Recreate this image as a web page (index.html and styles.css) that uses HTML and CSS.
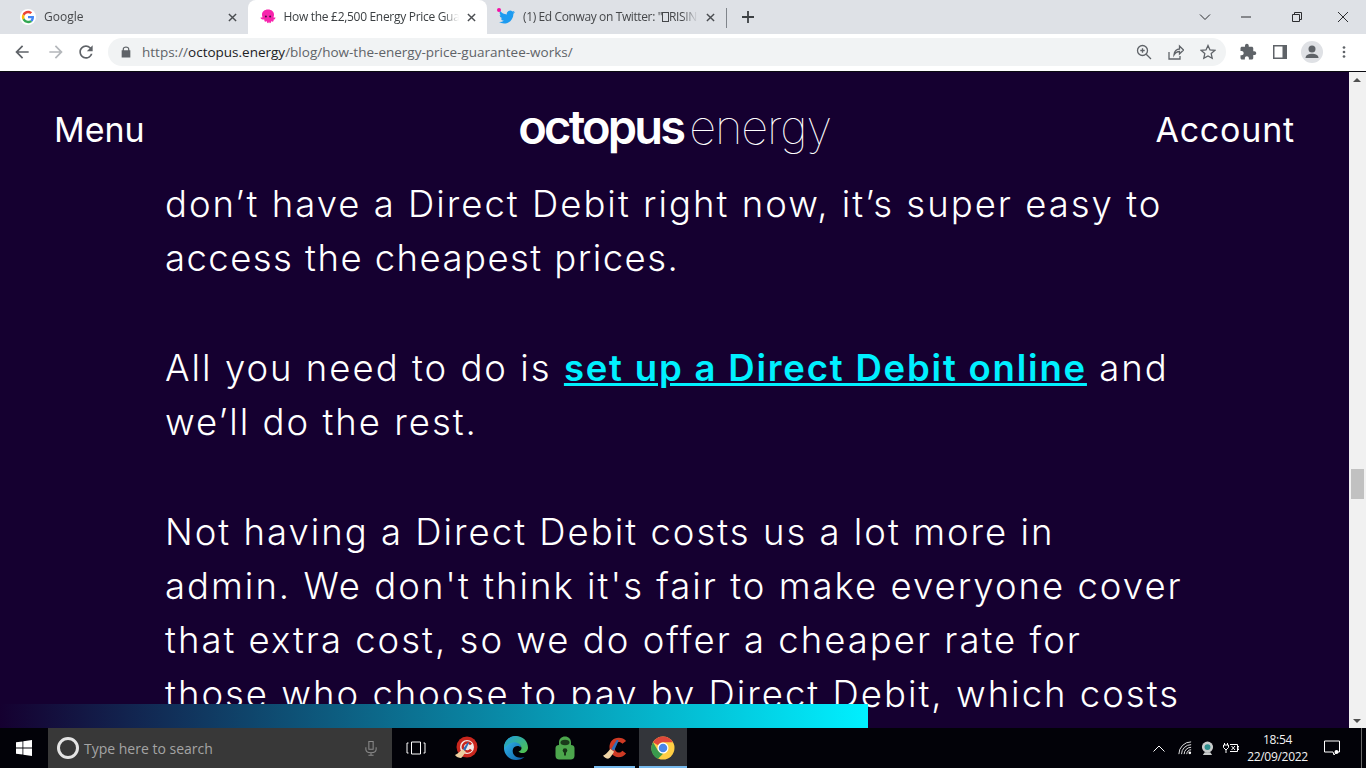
FILE: index.html
```html
<!DOCTYPE html>
<html lang="en">
<head>
  <meta charset="UTF-8">
  <meta name="viewport" content="width=device-width, initial-scale=1.0">
  <title>How the £2,500 Energy Price Guarantee works</title>
  <link rel="stylesheet" href="styles.css">
</head>
<body>
  <!-- Tabs -->
  <div class="tabstrip">
    <div class="tab">
      <svg class="favicon" viewBox="0 0 48 48"><circle cx="24" cy="24" r="24" fill="#fff"/><path fill="#EA4335" d="M24 12.5c3.2 0 5.6 1.3 7.2 2.8l5.3-5.2C33.300 7.200 29.100 5.500 24 5.500 16.800 5.500 10.600 9.600 7.600 15.600l6.100 4.800C15.100 15.800 19.200 12.500 24 12.500z"/><path fill="#4285F4" d="M42 24.400c0-1.500-.1-2.600-.4-3.700H24v6.800h10.300c-.2 1.700-1.300 4.200-3.800 5.900l5.900 4.600C39.900 34.800 42 30 42 24.400z"/><path fill="#FBBC05" d="M13.700 27.600c-.4-1.100-.6-2.300-.6-3.600s.2-2.500.6-3.600l-6.100-4.800C6.300 18.100 5.500 21 5.500 24s.8 5.900 2.100 8.400l6.100-4.800z"/><path fill="#34A853" d="M24 42.500c5 0 9.200-1.600 12.300-4.500l-5.900-4.600c-1.600 1.100-3.700 1.900-6.400 1.900-4.800 0-8.900-3.300-10.300-7.700l-6.100 4.800C10.600 38.400 16.800 42.500 24 42.500z"/></svg>
      <span class="tab-title">Google</span>
      <svg class="tab-close" viewBox="0 0 10 10"><path d="M1 1l8 8M9 1l-8 8"/></svg>
    </div>
    <div class="tab tab-active">
      <svg class="favicon" viewBox="0 0 16 16"><path fill="#f724ad" d="M8 .5c3.600 0 6 2.200 6 5.200 0 1-.2 1.900-.6 2.600.5.300 1.200.4 2.100.2-.1 1.200-.8 2-1.900 2.100.2.800 0 1.700-.7 2.200-.6-.1-1.100-.4-1.500-.9-.2 1-.8 2-1.500 2.300-.5-.4-.8-1-.9-1.600-.1.600-.4 1.200-.9 1.600-.7-.3-1.300-1.300-1.500-2.300-.4.500-.9.800-1.500.9-.7-.5-.9-1.400-.7-2.200C1.300 10.500.6 9.700.5 8.500c.9.200 1.600.1 2.100-.2C2.200 7.600 2 6.700 2 5.700 2 2.700 4.400.5 8 .5z"/><circle cx="5.900" cy="7.400" r="1" fill="#4a1040"/><circle cx="10.100" cy="7.400" r="1" fill="#4a1040"/></svg>
      <span class="tab-title">How the £2,500 Energy Price Gua</span>
      <svg class="tab-close" viewBox="0 0 10 10"><path d="M1 1l8 8M9 1l-8 8"/></svg>
    </div>
    <div class="tab tab-last">
      <span class="favicon favicon-wrap">
        <svg viewBox="0 0 24 24"><path fill="#1d9bf0" d="M23.953 4.57a10 10 0 01-2.825.775 4.958 4.958 0 002.163-2.723c-.951.555-2.005.959-3.127 1.184a4.92 4.92 0 00-8.384 4.482C7.69 8.095 4.067 6.13 1.64 3.162a4.822 4.822 0 00-.666 2.475c0 1.71.87 3.213 2.188 4.096a4.904 4.904 0 01-2.228-.616v.06a4.923 4.923 0 003.946 4.827 4.996 4.996 0 01-2.212.085 4.936 4.936 0 004.604 3.417 9.867 9.867 0 01-6.102 2.105c-.39 0-.779-.023-1.17-.067a13.995 13.995 0 007.557 2.209c9.053 0 13.998-7.496 13.998-13.985 0-.21 0-.42-.015-.63A9.935 9.935 0 0024 4.59z"/></svg>
        <span class="tab-dot"></span>
      </span>
      <span class="tab-title">(1) Ed Conway on Twitter: "<span class="tofu"></span>RISIN</span>
      <svg class="tab-close" viewBox="0 0 10 10"><path d="M1 1l8 8M9 1l-8 8"/></svg>
    </div>
    <div class="tab-sep"></div>
    <svg class="new-tab" viewBox="0 0 12 12"><path d="M6 0v12M0 6h12"/></svg>
    <div class="win-controls">
      <svg class="win-chevron" viewBox="0 0 12 12"><path d="M1 3.500l5 5 5-5"/></svg>
      <svg class="win-min" viewBox="0 0 12 12"><path d="M1 6h10"/></svg>
      <svg class="win-restore" viewBox="0 0 12 12"><path d="M1.500 3.500h7v7h-7zM3.500 3.500v-2h7v7h-2"/></svg>
      <svg class="win-close" viewBox="0 0 12 12"><path d="M1 1l10 10M11 1L1 11"/></svg>
    </div>
  </div>

  <!-- Address bar -->
  <div class="toolbar">
    <svg class="tool" viewBox="0 0 24 24"><path fill="#5f6368" d="M20 11H7.830l5.590-5.590L12 4l-8 8 8 8 1.410-1.410L7.830 13H20v-2z"/></svg>
    <svg class="tool" viewBox="0 0 24 24"><path fill="#b4b7bb" d="M4 11h12.170l-5.590-5.590L12 4l8 8-8 8-1.410-1.410L16.170 13H4v-2z"/></svg>
    <svg class="tool" viewBox="0 0 24 24"><path fill="#5f6368" d="M17.650 6.350A7.958 7.958 0 0012 4c-4.420 0-7.990 3.580-7.990 8s3.570 8 7.990 8c3.730 0 6.840-2.550 7.730-6h-2.080A5.990 5.990 0 0112 18c-3.310 0-6-2.690-6-6s2.690-6 6-6c1.660 0 3.140.69 4.220 1.780L13 11h7V4l-2.350 2.350z"/></svg>
    <div class="omnibox">
      <svg class="lock" viewBox="0 0 12 14"><path fill="#5f6368" d="M2 5V3.800C2 1.700 3.700.5 6 .5s4 1.200 4 3.300V5h1.200v8.500H.8V5H2zm1.500 0h5V3.800C8.500 2.500 7.400 2 6 2s-2.500.5-2.500 1.800V5z"/></svg>
      <span class="url"><span class="url-dim">https://</span>octopus.energy<span class="url-dim">/blog/how-the-energy-price-guarantee-works/</span></span>
      <svg class="omni-icon" viewBox="0 0 16 16"><circle cx="6.500" cy="6.500" r="5"/><path d="M10.200 10.200L15 15M4.300 6.500h4.400M6.500 4.300v4.400"/></svg>
      <svg class="omni-icon" viewBox="0 0 16 16"><path d="M1 8v7h11v-3M6 11c0-4 3-6 5.500-6V2L15.500 6l-4 4V7.500C9 7.500 7.300 8.800 6 11z"/></svg>
      <svg class="omni-icon" viewBox="0 0 16 16"><path d="M8 1.500l2 4.400 4.800.5-3.600 3.200 1 4.700L8 11.900l-4.200 2.400 1-4.700L1.200 6.400 6 5.900z"/></svg>
    </div>
    <svg class="tool-end" viewBox="0 0 24 24"><path fill="#5f6368" d="M20.500 11H19V7c0-1.100-.9-2-2-2h-4V3.500C13 2.120 11.880 1 10.500 1S8 2.120 8 3.500V5H4c-1.100 0-1.990.9-1.990 2v3.800H3.500c1.490 0 2.700 1.210 2.700 2.700s-1.210 2.700-2.700 2.700H2V20c0 1.100.9 2 2 2h3.800v-1.500c0-1.490 1.210-2.700 2.700-2.700 1.490 0 2.700 1.210 2.700 2.700V22H17c1.100 0 2-.9 2-2v-4h1.500c1.380 0 2.500-1.120 2.500-2.500S21.880 11 20.500 11z"/></svg>
    <svg class="tool-end tool-panel" viewBox="3 3 18 18"><path fill="#5f6368" fill-rule="evenodd" d="M5 5h14v14H5zM6.500 6.500v11H14.500v-11z"/></svg>
    <span class="avatar">
      <svg viewBox="0 0 22 22"><circle cx="11" cy="8" r="3.500" fill="#5f6368"/><path fill="#5f6368" d="M4.500 17c0-3 3.500-4.300 6.500-4.300s6.500 1.300 6.500 4.300z"/></svg>
    </span>
    <svg class="tool-end tool-menu" viewBox="0 0 24 24"><circle cx="12" cy="6" r="1.800" fill="#5f6368"/><circle cx="12" cy="12" r="1.800" fill="#5f6368"/><circle cx="12" cy="18" r="1.800" fill="#5f6368"/></svg>
  </div>

  <!-- Page -->
  <div class="viewport">
    <div class="page">
      <div class="nav">
        <span class="nav-link">Menu</span>
        <div class="logo"><span class="logo-bold">octopus</span><span class="logo-thin">energy</span></div>
        <span class="nav-link nav-right">Account</span>
      </div>
      <div class="article">
        <p>don’t have a Direct Debit right now, it’s super easy to<br><span class="tight">access the cheapest prices.</span></p>
        <p>All you need to do is <a href="#">set up a Direct Debit online</a> and<br>we’ll do the rest.</p>
        <p>Not having a Direct Debit costs us a lot more in<br>admin. We don't think it's fair to make everyone cover<br>that extra cost, so we do offer a cheaper rate for<br>those who choose to pay by Direct Debit, which costs</p>
      </div>
      <div class="progress"></div>
    </div>
    <div class="scrollbar">
      <span class="arrow-up"></span>
      <div class="thumb"></div>
      <span class="arrow-down"></span>
    </div>
  </div>

  <!-- Windows taskbar -->
  <div class="taskbar">
    <div class="start">
      <svg viewBox="0 0 16 16"><path fill="#fff" d="M0 2.300l6.500-.9v6.200H0zM7.300 1.300L16 0v7.600H7.300zM0 8.400h6.500v6.200L0 13.700zM7.300 8.400H16V16l-8.700-1.200z"/></svg>
    </div>
    <div class="search">
      <span class="cortana"></span>
      <span class="search-text">Type here to search</span>
      <svg class="mic" viewBox="0 0 14 18"><path d="M4.500 1.500h5v9h-5zM1 8v2.500C1 13 3.500 14.500 7 14.500s6-1.500 6-4V8M7 14.500v3M4 17.500h6"/></svg>
    </div>
    <div class="task">
      <svg viewBox="0 0 20 14" class="taskview"><path d="M5.500 1h9v12h-9zM2.500 2H1v10h1.500M17.500 2H19v10h-1.500"/></svg>
    </div>
    <div class="task">
      <svg viewBox="0 0 24 24" class="task-icon"><circle cx="13" cy="11" r="10.500" fill="#c8261d"/><circle cx="13" cy="11" r="7" fill="#f3e8e4"/><path d="M17 8.500a4.500 4.500 0 100 5" fill="none" stroke="#c8261d" stroke-width="2.500"/><path d="M1 19c3-1 6-5 8-6l3 3c-2 2-4 6-5 6-2 0-5-1-6-3z" fill="#edcf9f"/><path d="M9 13l5-7 1 1-4 8z" fill="#2c6fbb"/></svg>
    </div>
    <div class="task">
      <svg viewBox="0 0 24 24" class="task-icon task-edge"><defs><linearGradient id="edgeA" x1="0" y1="0" x2="1" y2="1"><stop offset="0" stop-color="#35c1f1"/><stop offset="1" stop-color="#0c59a4"/></linearGradient><linearGradient id="edgeB" x1="0" y1="0" x2="1" y2="1"><stop offset="0" stop-color="#1b9de2"/><stop offset="1" stop-color="#54c441"/></linearGradient></defs><path fill="url(#edgeA)" d="M12 0C5.400 0 0 5.400 0 12c0 6.600 5.400 12 12 12 3.600 0 6.400-1 8.500-3-3 1-7 1-9.500-1-3-2.500-3-7-.5-9 2-1.500 5-1.500 6 .5 1.500-5-2-11.500-4.500-11.500z"/><path fill="url(#edgeB)" d="M12 0c6.600 0 12 5 12 11.500 0 3.500-2.700 5.500-5.500 5.500-2 0-3.500-.6-4-1.500 2-.3 3.200-1.800 3-3.500C17 8 13 5.500 8.500 6.500 5 7.300 2 10 0 12 0 5.400 5.400 0 12 0z"/></svg>
    </div>
    <div class="task">
      <svg viewBox="0 0 20 24" class="task-icon"><path fill="#4ca64c" d="M4 9V6.500C4 3 6.500.5 10 .5s6 2.500 6 6V9c2 0 3.500 1 3.500 3v8c0 2.500-2 3.500-3.500 3.500H4C2.500 23.500.5 22.500.5 20v-8C.5 10 2 9 4 9z"/><ellipse cx="10" cy="6.500" rx="4.500" ry="2.800" fill="#1b3a1b"/><circle cx="10" cy="14.500" r="2.300" fill="#173317"/><path d="M9 15.500h2v4H9z" fill="#173317"/></svg>
    </div>
    <div class="task task-open">
      <svg viewBox="0 0 26 24" class="task-icon"><path fill="#cf3a24" d="M17 1C11 1 7 5.500 7 11s4 11 10 11c3.500 0 6-1.500 8-4l-4-3c-1 1.500-2.500 2-4 2-2.800 0-4.500-2.800-4.500-6s1.700-5.500 4.500-5.500c1.500 0 3 .7 4 2l4-3c-2-2.500-4.500-3.500-8-3.500z"/><path d="M0 20c3-.5 6-5 8-7l4 3c-2 3-4 7-6 7.500-2 .2-5-1.500-6-3.500z" fill="#efd3a5"/><path d="M9 13L15 3l2 1-5 11z" fill="#2c6fbb"/></svg>
    </div>
    <div class="task task-open task-active">
      <svg viewBox="0 0 48 48" class="task-icon task-chrome"><circle cx="24" cy="24" r="23" fill="#ffce44"/><path fill="#e0483a" d="M24 1a23 23 0 0119.900 11.500H24a11.500 11.500 0 00-10 5.800L4.100 12.500A23 23 0 0124 1z"/><path fill="#3a9a4d" d="M14 29.700l10 5.800L14.100 45.700A23 23 0 014.100 12.500z"/><circle cx="24" cy="24" r="11" fill="#fff"/><circle cx="24" cy="24" r="8.500" fill="#4a86e8"/></svg>
    </div>
    <div class="tray">
      <svg class="tray-chevron" viewBox="0 0 12 7"><path d="M.5 6.500L6 1l5.500 5.500"/></svg>
      <svg class="tray-wifi" viewBox="0 0 16 16"><path d="M1 15A14 14 0 0115 1M4 15A11 11 0 0115 4.200M7 15A8 8 0 0115 7.200M10 15a5 5 0 015-5"/><circle cx="13.500" cy="13.500" r="1.500" fill="#fff" stroke="none"/></svg>
      <svg class="tray-cam" viewBox="0 0 14 16"><circle cx="7" cy="6.500" r="6" fill="#c9cccc"/><circle cx="7" cy="6.500" r="3.200" fill="#2f8f8f"/><path d="M2 15h10l-2-3H4z" fill="#c9cccc"/></svg>
      <svg class="tray-power" viewBox="0 0 16 12"><path d="M1.500 1v2M4.500 1v2M.5 3h5v2.500L3 8 .5 5.500zM3 8v3M7 2.500h7.500v7H7M14.500 4.500H16v3h-1.500M8.500 4l3.500 4M12 4L8.500 8"/></svg>
      <div class="clock">18:54<br>22/09/2022</div>
      <svg class="tray-note" viewBox="0 0 16 16"><path d="M.5 1h15v11h-3l-2.500 3-1-3H.5z"/><circle cx="12.500" cy="12" r="2" fill="#fff" stroke="none"/></svg>
      <span class="show-desktop"></span>
    </div>
  </div>
</body>
</html>
```

FILE: styles.css
```css
* {
  box-sizing: border-box;
  margin: 0;
  padding: 0;
}

html, body {
  height: 100%;
  overflow: hidden;
}

body {
  width: 1366px;
  height: 768px;
  display: flex;
  flex-direction: column;
  font-family: "Open Sans", "Noto Sans", Arial, sans-serif;
  background: #150030;
}

svg {
  display: block;
  flex-shrink: 0;
}

/* Tabs */
.tabstrip {
  height: 34px;
  background: #dee1e6;
  display: flex;
  align-items: flex-end;
  padding-left: 8px;
}

.tab {
  width: 239.500px;
  height: 26px;
  padding: 0 8px 8px 12px;
  display: flex;
  align-items: center;
  gap: 8px;
  font-size: 12px;
  letter-spacing: -.3px;
  line-height: 16px;
  color: #45474a;
  border-radius: 8px 8px 0 0;
}

.tab-active {
  height: 34px;
  background: #fff;
  color: #3c4043;
  padding-bottom: 0;
}

.tab-last {
  width: 239px;
  letter-spacing: -.38px;
}

.favicon {
  width: 16px;
  height: 16px;
  flex-shrink: 0;
}

.favicon-wrap {
  position: relative;
  display: block;
}

.tab-dot {
  position: absolute;
  top: -1px;
  left: -2px;
  width: 4px;
  height: 4px;
  border-radius: 50%;
  background: #f50fa5;
}

.tab-title {
  flex: 1;
  min-width: 0;
  white-space: nowrap;
  overflow: hidden;
  -webkit-mask-image: linear-gradient(to right, #000 calc(100% - 16px), transparent 100%);
  mask-image: linear-gradient(to right, #000 calc(100% - 16px), transparent 100%);
}

.tab:first-child .tab-title {
  letter-spacing: 0;
}

.tofu {
  display: inline-block;
  width: 7px;
  height: 10px;
  border: 1px solid #45474a;
  vertical-align: -1px;
}

.tab-close {
  width: 9px;
  height: 9px;
  margin-right: 3px;
  fill: none;
  stroke: #4a4d51;
  stroke-width: 1.600;
}

.tab-sep {
  width: 1px;
  height: 20px;
  margin-bottom: 6px;
  background: #80858b;
}

.new-tab {
  width: 12px;
  height: 12px;
  margin: 0 0 11px 15px;
  fill: none;
  stroke: #3c4043;
  stroke-width: 1.800;
}

.win-controls {
  margin-left: auto;
  height: 34px;
  display: flex;
  align-items: center;
  padding-right: 17px;
}

.win-controls svg {
  fill: none;
  stroke: #2c2d30;
  stroke-width: 1;
  width: 12px;
  height: 12px;
}

.win-min {
  margin-left: 29px;
}

.win-restore {
  margin-left: 39px;
}

.win-close {
  margin-left: 34px;
}

/* Toolbar */
.toolbar {
  height: 37px;
  background: #fff;
  display: flex;
  align-items: center;
  padding: 0 12px 2px 12px;
  flex-shrink: 0;
}

.tool {
  width: 20px;
  height: 20px;
  margin-right: 14px;
}

.tool:nth-child(2) {
  margin-right: 10px;
}

.tool:nth-child(3) {
  margin-right: 12px;
}

.omnibox {
  width: 1118px;
  height: 28px;
  border-radius: 14px;
  background: #f1f3f4;
  display: flex;
  align-items: center;
  padding-left: 13px;
}

.lock {
  width: 10px;
  height: 12px;
  margin-right: 11px;
}

.url {
  flex: 1;
  font-size: 13.500px;
  color: #202124;
  white-space: nowrap;
}

.url-dim {
  color: #5f6368;
}

.omni-icon {
  width: 16px;
  height: 16px;
  margin-right: 16px;
  fill: none;
  stroke: #5f6368;
  stroke-width: 1.300;
}

.omni-icon:last-child {
  margin-right: 10px;
}

.tool-end {
  width: 18px;
  height: 18px;
  margin-left: 13px;
}

.tool-panel {
  margin-left: 14px;
}

.avatar {
  width: 22px;
  height: 22px;
  margin-left: 12px;
  border-radius: 50%;
  background: #dfe1e5;
  display: block;
}

.tool-menu {
  margin-left: 12px;
}

/* Page */
.viewport {
  height: 657px;
  display: flex;
  flex-shrink: 0;
  border-top: 1px solid #0a0a10;
}

.page {
  position: relative;
  width: 1349px;
  overflow: hidden;
  background: #150030;
  color: #fff;
  font-family: Inter, "Liberation Sans", sans-serif;
}

.nav {
  height: 105px;
  padding: 0 54px;
  display: grid;
  grid-template-columns: 1fr auto 1fr;
  align-items: start;
}

.nav-link {
  margin-top: 35px;
  font-size: 34px;
  font-weight: 400;
  line-height: 46px;
}

.nav-right {
  justify-self: end;
  letter-spacing: .8px;
}

.logo {
  margin-top: 25px;
  display: flex;
  align-items: baseline;
  line-height: 60px;
}

.logo-bold {
  font-size: 47px;
  font-weight: 600;
  letter-spacing: -2.800px;
}

.logo-thin {
  margin-left: 6px;
  font-size: 47px;
  font-weight: 100;
  letter-spacing: -1.200px;
}

.article {
  padding-left: 165px;
  font-size: 36.500px;
  font-weight: 300;
  letter-spacing: 2px;
  line-height: 54px;
  white-space: nowrap;
}

.article p {
  margin-bottom: 56px;
}

.article a {
  color: #00f0ff;
  font-weight: 600;
  letter-spacing: 1.800px;
}

.tight {
  letter-spacing: 1.450px;
}

.progress {
  position: absolute;
  left: 0;
  bottom: 0;
  width: 868px;
  height: 24px;
  background: linear-gradient(to right, #150030 0%, #00f0ff 100%);
}

.scrollbar {
  position: relative;
  width: 17px;
  background: #f1f1f1;
}

.thumb {
  position: absolute;
  top: 397px;
  left: 2px;
  width: 13px;
  height: 30px;
  background: #c1c1c1;
}

.arrow-up, .arrow-down {
  position: absolute;
  left: 4px;
  width: 0;
  height: 0;
  border-left: 4px solid transparent;
  border-right: 4px solid transparent;
}

.arrow-up {
  top: 6px;
  border-bottom: 4px solid #505050;
}

.arrow-down {
  bottom: 5px;
  border-top: 4px solid #505050;
}

/* Taskbar */
.taskbar {
  height: 40px;
  flex-shrink: 0;
  background: #020208;
  display: flex;
  align-items: stretch;
  color: #fff;
}

.start {
  width: 48px;
  display: flex;
  align-items: center;
  justify-content: center;
}

.start svg {
  width: 16px;
  height: 16px;
}

.search {
  width: 344px;
  background: #383838;
  display: flex;
  align-items: center;
  padding-left: 9px;
}

.cortana {
  width: 22px;
  height: 22px;
  border: 3px solid #e4e4e4;
  border-radius: 50%;
}

.search-text {
  flex: 1;
  margin-left: 5px;
  font-size: 14px;
  color: #a4a4a4;
}

.mic {
  width: 12px;
  height: 16px;
  margin-right: 15px;
  fill: none;
  stroke: #8a8a8a;
  stroke-width: 1.200;
}

.task {
  width: 49.500px;
  display: flex;
  align-items: center;
  justify-content: center;
  position: relative;
}

.taskview {
  width: 20px;
  height: 14px;
  margin-right: 2px;
  fill: none;
  stroke: #fff;
  stroke-width: 1;
}

.task-icon {
  width: 24px;
  height: 24px;
}

.task-open::after {
  content: "";
  position: absolute;
  left: 4px;
  right: 5px;
  bottom: 0;
  height: 2px;
  background: #76b9ed;
}

.task-active {
  background: #33353a;
  width: 48px;
  margin-left: -1px;
}

.task-active::after {
  left: 0;
  right: 0;
}

.tray {
  flex: 1;
  display: flex;
  align-items: center;
  padding-left: 466px;
  position: relative;
}

.tray svg {
  fill: none;
  stroke: #fff;
}

.tray-chevron {
  width: 12px;
  height: 7px;
}

.tray-wifi {
  width: 14px;
  height: 14px;
  margin-left: 13px;
}

.tray-cam {
  width: 13px;
  height: 15px;
  margin-left: 9px;
  stroke: none !important;
}

.tray-power {
  width: 16px;
  height: 12px;
  margin-left: 9px;
}

.clock {
  width: 68px;
  margin-left: 5px;
  text-align: center;
  font-size: 12px;
  letter-spacing: -.3px;
  line-height: 17px;
  color: #f2f2f2;
}

.tray-note {
  width: 16px;
  height: 16px;
  margin-left: 12px;
}

.show-desktop {
  position: absolute;
  right: 4px;
  top: 0;
  bottom: 0;
  width: 1px;
  background: #6a6a6a;
}
```
